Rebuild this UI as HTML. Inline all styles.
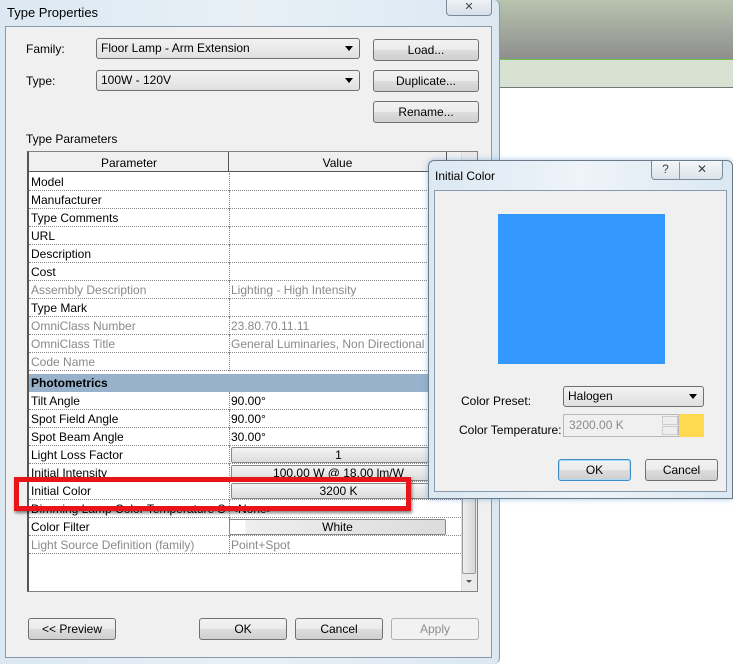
<!DOCTYPE html>
<html><head><meta charset="utf-8"><style>
*{box-sizing:border-box;margin:0;padding:0}
body{width:733px;height:664px;overflow:hidden;position:relative;background:#fff;font-family:"Liberation Sans",sans-serif;font-size:12px;color:#000}
.a{position:absolute}
.btn{position:absolute;border:1px solid #707070;border-radius:3px;background:linear-gradient(#f2f2f2 0,#ebebeb 50%,#dddddd 51%,#cfcfcf 100%);text-align:center;font-size:12px}
.combo{position:absolute;border:1px solid #707070;border-radius:3px;background:linear-gradient(#f2f2f2,#e0e0e0);font-size:12px;padding-left:4px}
.combo:after{content:"";position:absolute;right:6px;top:7px;border-left:4px solid transparent;border-right:4px solid transparent;border-top:5px solid #000}
.row{position:absolute;left:29px;width:432px;height:18px;border-bottom:1px dotted #888;font-size:12px;line-height:19px}
.row .p{position:absolute;left:2px;top:0}
.row .v{position:absolute;left:202px;top:0}
.row .c{position:absolute;left:200px;top:0;height:18px;border-left:1px dotted #888}
.g{color:#8a8a8a}
.vb{position:absolute;left:202px;top:1px;width:215px;height:16px;border:1px solid #888;border-radius:2px;background:linear-gradient(#f4f4f4,#dcdcdc);text-align:center;line-height:15px}
</style></head><body>
<div class="a" style="left:490px;top:0;width:243px;height:59px;background:linear-gradient(#b8c4ae,#8e8e8e)"></div>
<div class="a" style="left:490px;top:59px;width:243px;height:1px;background:#6cc24a"></div>
<div class="a" style="left:490px;top:60px;width:243px;height:28px;background:#d8e2d2;border-bottom:1px solid #777"></div>
<div class="a" style="left:0;top:0;width:500px;height:664px;background:linear-gradient(90deg,#dbe8f2,#e8f0f6 50%,#dbe8f2);border-right:1px solid #8a9aa8;border-radius:0 6px 6px 0"></div>
<div class="a" style="left:7px;top:5px;font-size:13px">Type Properties</div>
<div class="a" style="left:446px;top:0;width:46px;height:16px;border:1px solid #7a8a98;border-top:0;border-radius:0 0 4px 4px;background:linear-gradient(#eef2f6,#d6dfe8);text-align:center;font-size:11px;color:#444;line-height:14px">✕</div>
<div class="a" style="left:5px;top:26px;width:487px;height:632px;background:#f0f0f0;border:1px solid #8a9aa8"></div>
<div class="a" style="left:26px;top:42px">Family:</div>
<div class="a" style="left:26px;top:74px">Type:</div>
<div class="combo" style="left:96px;top:38px;width:264px;height:21px;line-height:19px">Floor Lamp - Arm Extension</div>
<div class="combo" style="left:96px;top:70px;width:264px;height:21px;line-height:19px">100W - 120V</div>
<div class="btn" style="left:373px;top:39px;width:106px;height:22px;line-height:20px">Load...</div>
<div class="btn" style="left:373px;top:70px;width:106px;height:22px;line-height:20px">Duplicate...</div>
<div class="btn" style="left:373px;top:101px;width:106px;height:22px;line-height:20px">Rename...</div>
<div class="a" style="left:26px;top:132px">Type Parameters</div>
<div class="a" style="left:27px;top:151px;width:451px;height:441px;background:#fff;border:1px solid #828282;border-left:2px solid #555"></div>
<div class="a" style="left:29px;top:152px;width:432px;height:20px;background:#f0f0f0;border-bottom:1px solid #555"></div>
<div class="a" style="left:228px;top:152px;width:1px;height:20px;background:#555"></div>
<div class="a" style="left:446px;top:152px;width:1px;height:20px;background:#555"></div>
<div class="a" style="left:29px;top:156px;width:200px;text-align:center">Parameter</div>
<div class="a" style="left:229px;top:156px;width:217px;text-align:center">Value</div>
<div class="a" style="left:461px;top:152px;width:16px;height:439px;background:#eaeaea;border-left:1px solid #ddd"></div>
<div class="a" style="left:462px;top:390px;width:14px;height:184px;background:linear-gradient(90deg,#eee,#d8d8d8);border:1px solid #999;border-radius:2px"></div>
<div class="a" style="left:466px;top:580px;border-left:3px solid transparent;border-right:3px solid transparent;border-top:3px solid #555"></div>

<div class="row" style="top:173px"><span class="p">Model</span><span class="c"></span></div>
<div class="row" style="top:191px"><span class="p">Manufacturer</span><span class="c"></span></div>
<div class="row" style="top:209px"><span class="p">Type Comments</span><span class="c"></span></div>
<div class="row" style="top:227px"><span class="p">URL</span><span class="c"></span></div>
<div class="row" style="top:245px"><span class="p">Description</span><span class="c"></span></div>
<div class="row" style="top:263px"><span class="p">Cost</span><span class="c"></span></div>
<div class="row g" style="top:281px"><span class="p">Assembly Description</span><span class="c"></span><span class="v">Lighting - High Intensity</span></div>
<div class="row" style="top:299px"><span class="p">Type Mark</span><span class="c"></span></div>
<div class="row g" style="top:317px"><span class="p">OmniClass Number</span><span class="c"></span><span class="v">23.80.70.11.11</span></div>
<div class="row g" style="top:335px"><span class="p">OmniClass Title</span><span class="c"></span><span class="v">General Luminaries, Non Directional</span></div>
<div class="row g" style="top:353px"><span class="p">Code Name</span><span class="c"></span></div>
<div class="row" style="top:374px;background:#98b2cc;font-weight:bold;border-bottom:0"><span class="p">Photometrics</span></div>
<div class="row" style="top:392px"><span class="p">Tilt Angle</span><span class="c"></span><span class="v">90.00°</span></div>
<div class="row" style="top:410px"><span class="p">Spot Field Angle</span><span class="c"></span><span class="v">90.00°</span></div>
<div class="row" style="top:428px"><span class="p">Spot Beam Angle</span><span class="c"></span><span class="v">30.00°</span></div>
<div class="row" style="top:446px"><span class="p">Light Loss Factor</span><span class="c"></span><span class="vb">1</span></div>
<div class="row" style="top:464px"><span class="p">Initial Intensity</span><span class="c"></span><span class="vb">100.00 W @ 18.00 lm/W</span></div>
<div class="row" style="top:482px"><span class="p">Initial Color</span><span class="c"></span><span class="vb">3200 K</span></div>
<div class="row" style="top:500px"><span class="p">Dimming Lamp Color Temperature S</span><span class="c"></span><span class="v">&lt;None&gt;</span></div>
<div class="row" style="top:518px"><span class="p">Color Filter</span><span class="c"></span><span class="vb" style="width:217px;left:200px;background:linear-gradient(90deg,#fff 15px,#eee 16px,#dcdcdc)">White</span></div>
<div class="row g" style="top:536px"><span class="p">Light Source Definition (family)</span><span class="c"></span><span class="v">Point+Spot</span></div>

<div class="a" style="left:14px;top:477px;width:397px;height:34px;border:5px solid #e8141a;box-shadow:1px 2px 3px rgba(0,0,0,.5)"></div>

<div class="btn" style="left:28px;top:618px;width:88px;height:22px;line-height:20px">&lt;&lt; Preview</div>
<div class="btn" style="left:199px;top:618px;width:88px;height:22px;line-height:20px">OK</div>
<div class="btn" style="left:295px;top:618px;width:88px;height:22px;line-height:20px">Cancel</div>
<div class="btn" style="left:391px;top:618px;width:88px;height:22px;line-height:20px;color:#8d8d8d;border-color:#b0b0b0;background:#f2f2f2">Apply</div>

<div class="a" style="left:428px;top:160px;width:305px;height:339px;background:linear-gradient(90deg,#dbe8f2,#eef4f9 50%,#dbe8f2);border:1px solid #6a7a88;border-radius:6px 6px 0 0;box-shadow:0 0 6px rgba(80,140,200,.5)"></div>
<div class="a" style="left:435px;top:169px;font-size:12px">Initial Color</div>
<div class="a" style="left:651px;top:161px;width:72px;height:19px;border:1px solid #7a8a98;border-top:0;border-radius:0 0 4px 4px;background:linear-gradient(#f4f7fa,#dbe3ea);font-size:12px;color:#444"><span class="a" style="left:0;width:28px;text-align:center;top:1px;border-right:1px solid #8a98a6;height:17px">?</span><span class="a" style="left:28px;width:44px;text-align:center;top:1px">✕</span></div>
<div class="a" style="left:434px;top:190px;width:293px;height:302px;background:#f0f0f0;border:1px solid #8a9aa8"></div>
<div class="a" style="left:498px;top:214px;width:167px;height:150px;background:#3399ff"></div>
<div class="a" style="left:461px;top:394px">Color Preset:</div>
<div class="a" style="left:459px;top:423px">Color Temperature:</div>
<div class="combo" style="left:563px;top:386px;width:141px;height:21px;line-height:19px">Halogen</div>
<div class="a" style="left:563px;top:414px;width:116px;height:23px;border:1px solid #b8b8b8;background:#f0f0f0;color:#8a8a8a;padding-left:5px;line-height:21px">3200.00 K</div>
<div class="a" style="left:662px;top:416px;width:16px;height:9px;border:1px solid #ccc;background:#eee"></div>
<div class="a" style="left:662px;top:426px;width:16px;height:9px;border:1px solid #ccc;background:#eee"></div>
<div class="a" style="left:679px;top:414px;width:25px;height:23px;background:#ffd94f"></div>
<div class="btn" style="left:558px;top:459px;width:73px;height:22px;line-height:20px;border-color:#3c8dc8;box-shadow:inset 0 0 0 1px #a8dcf4">OK</div>
<div class="btn" style="left:645px;top:459px;width:73px;height:22px;line-height:20px">Cancel</div>
</body></html>
